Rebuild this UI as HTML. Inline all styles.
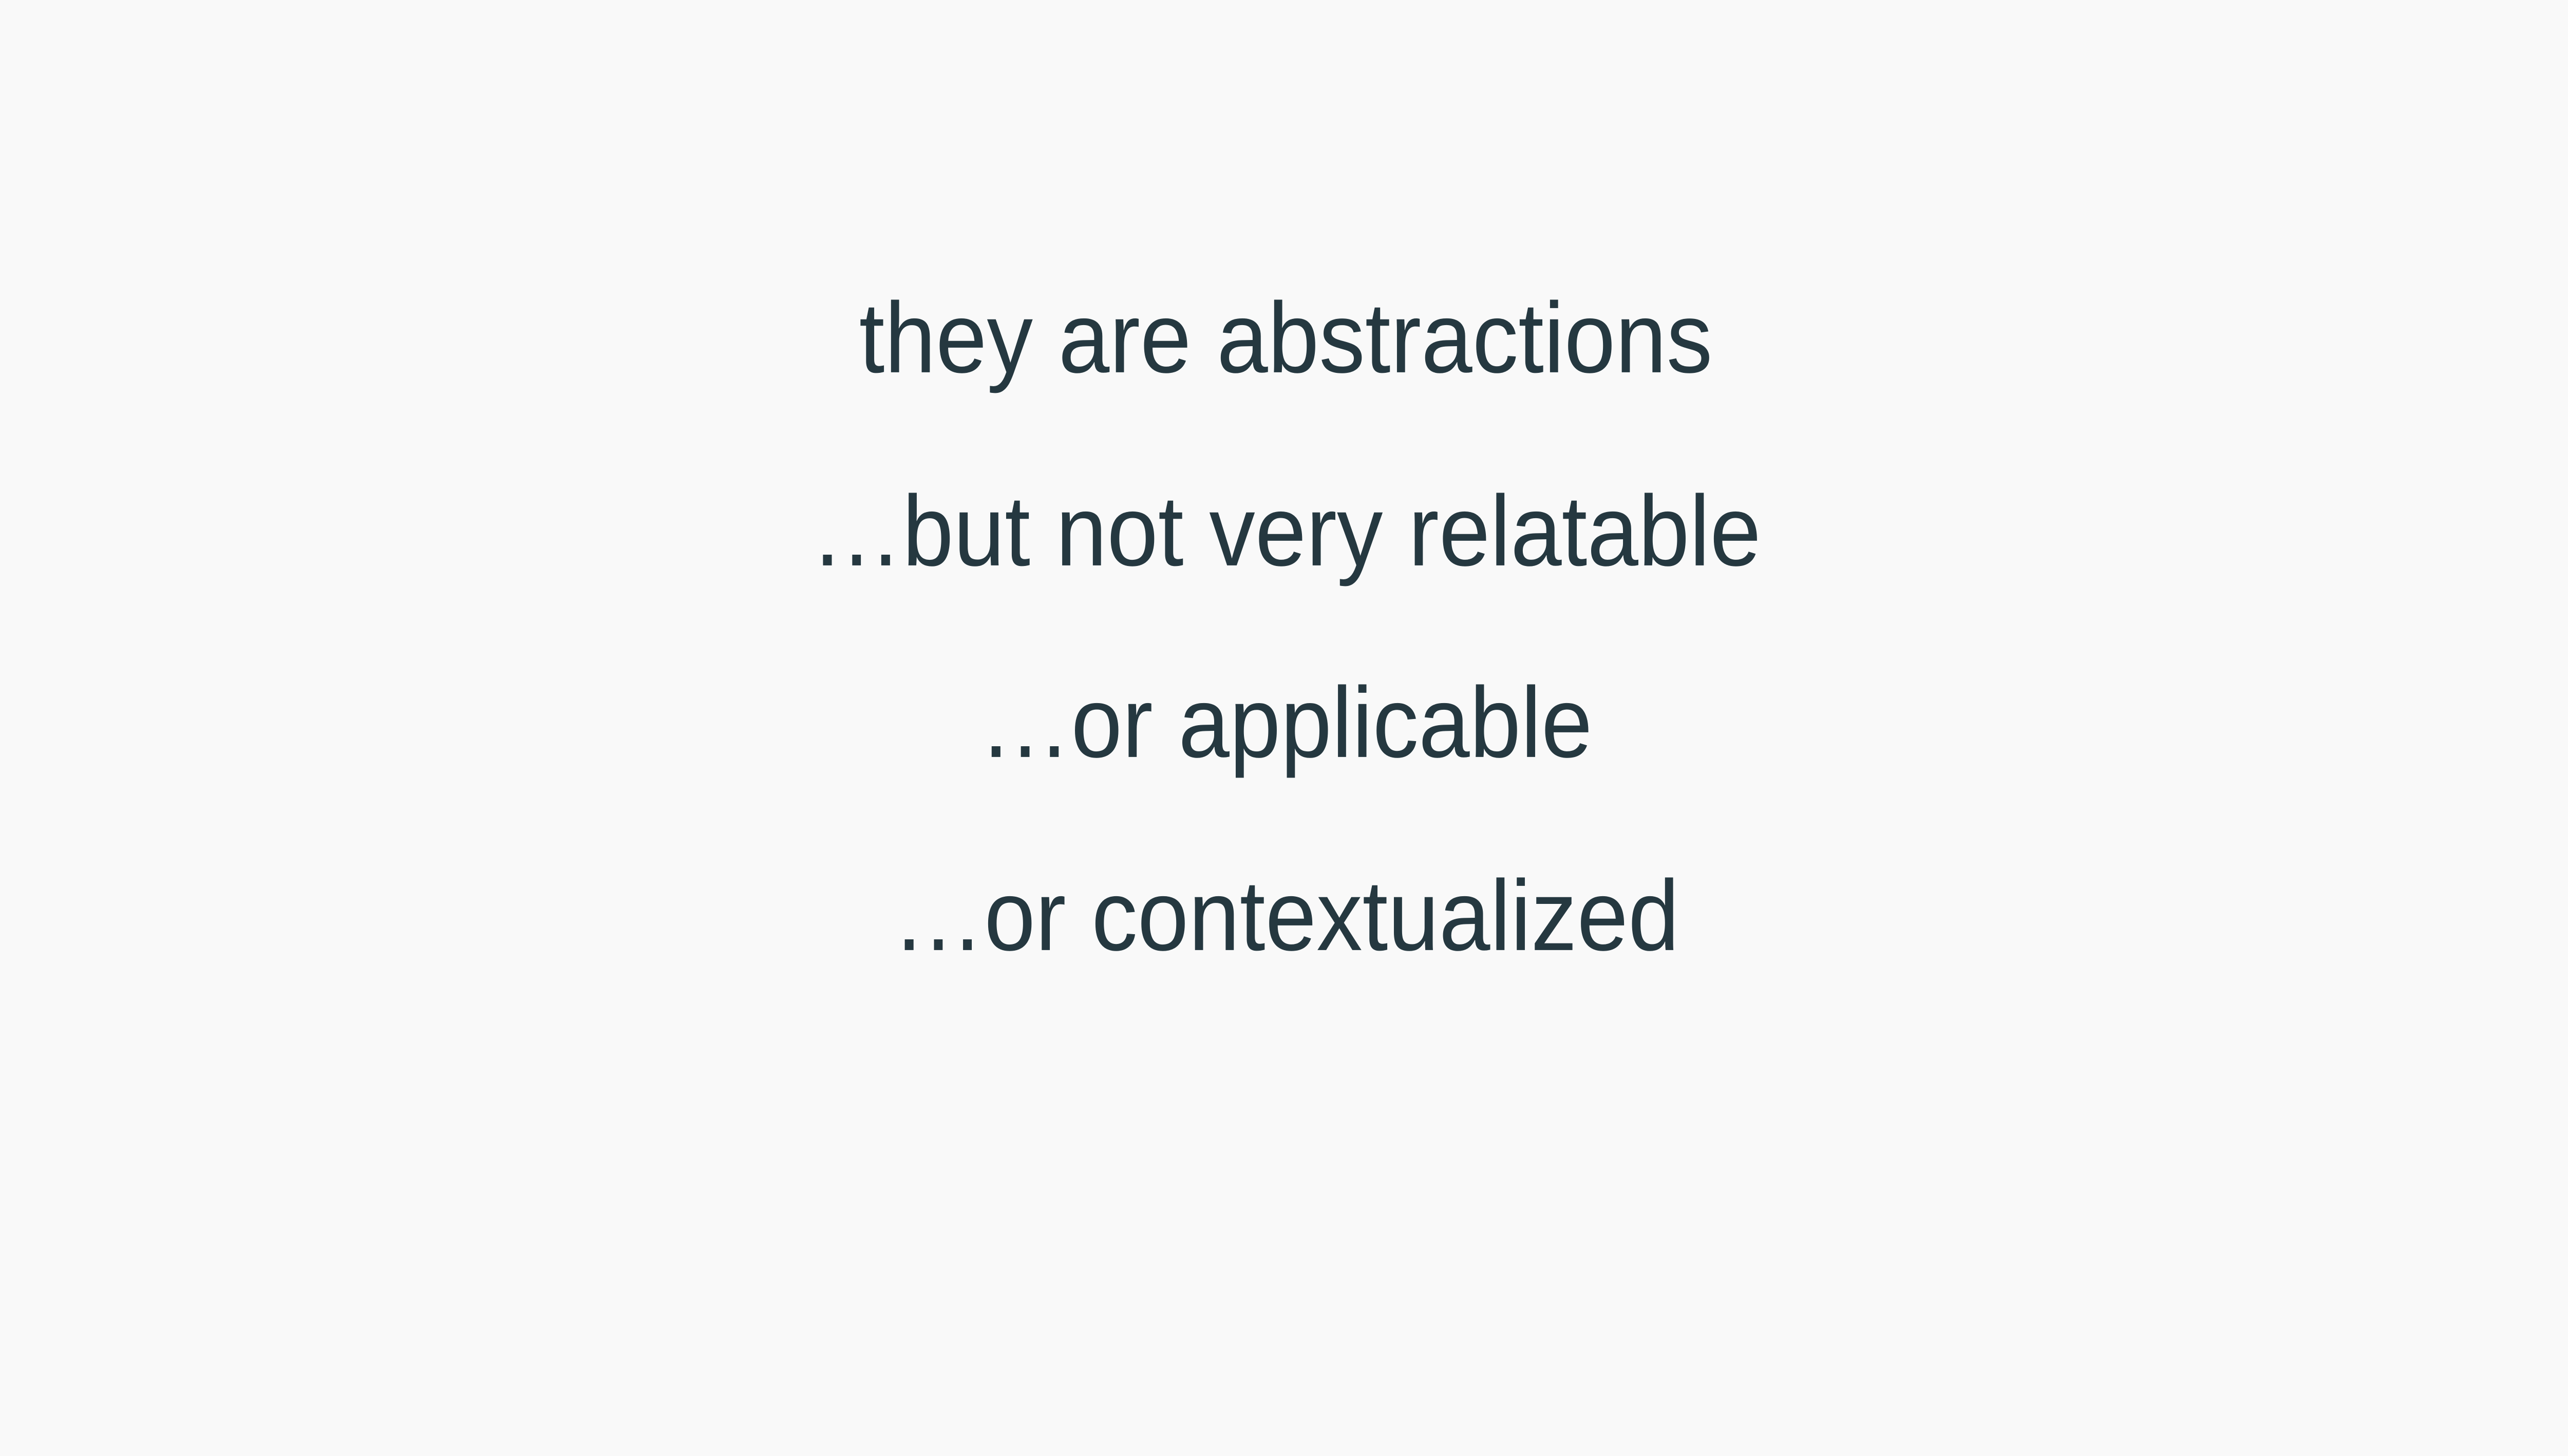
<!DOCTYPE html>
<html><head><meta charset="utf-8"><style>
html,body{margin:0;padding:0}
body{width:5039px;height:2835px;background:#f9f9f9;position:relative;overflow:hidden;font-family:"Liberation Sans",sans-serif;color:#253840}
.l{position:absolute;left:-16px;width:5039px;text-align:center;font-size:179px;line-height:182px;white-space:nowrap;transform:scaleY(1.09);transform-origin:50% 85%}
</style></head><body>
<div class="l" style="top:572px">they are abstractions</div>
<div class="l" style="top:948px">…but not very relatable</div>
<div class="l" style="top:1321px">…or applicable</div>
<div class="l" style="top:1697px">…or contextualized</div>
</body></html>
